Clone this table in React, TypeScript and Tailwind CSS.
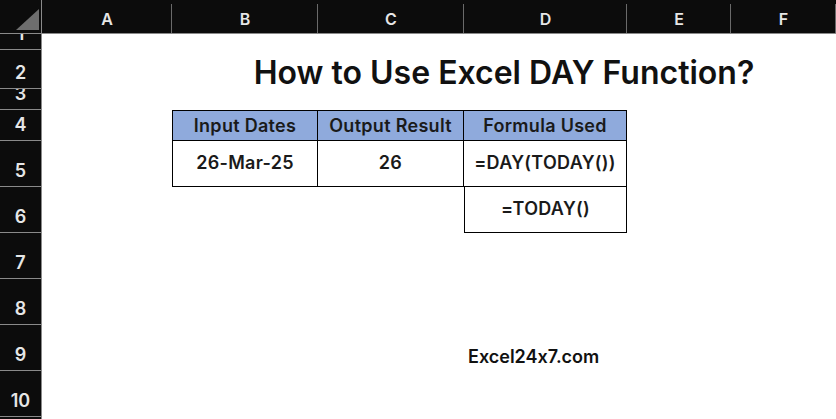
import React from "react";

const cols = ["A", "B", "C", "D", "E", "F"];
const rowHeights = [16, 39, 21, 31, 46, 46, 46, 46, 46, 46, 46];

const font = { fontFamily: "Inter, 'Liberation Sans', sans-serif" };

const cellText = "text-[18px] font-semibold text-[#1a1a1a] tracking-[0.3px] whitespace-nowrap";

export default function App() {
  return (
    <div
      className="w-[836px] h-[419px] overflow-hidden bg-white grid grid-cols-[42px_130px_146px_146px_163px_104px_105px] grid-rows-[34px_16px_39px_21px_31px_46px_46px_46px_46px_46px_46px_46px] [font-feature-settings:'calt'_0]"
      style={font}
    >
      {/* corner */}
      <div className="bg-[#0c0c0c] border-r border-b border-[#8a8a8a] relative">
        <svg width="42" height="34" className="absolute left-0 top-0">
          <polygon points="16,30 39,9 39,30" fill="#6e6e6e" />
        </svg>
      </div>

      {/* column headers */}
      {cols.map((c) => (
        <div key={c} className="bg-[#0c0c0c] border-b border-[#8a8a8a] flex items-center justify-center relative">
          <span className="text-[16px] font-semibold text-[#e6e6e6] leading-none pt-[4px]">{c}</span>
          <div className="absolute right-0 top-[4px] bottom-0 w-px bg-[#6a6a6a]" />
        </div>
      ))}

      {/* rows */}
      {rowHeights.map((h, i) => {
        const r = i + 1;
        return (
          <React.Fragment key={r}>
            <div className="bg-[#0c0c0c] border-r border-b border-[#8a8a8a] flex items-end justify-center overflow-hidden">
              <span className="text-[18px] font-semibold text-[#e6e6e6] leading-[18px] pb-[6px]">{r}</span>
            </div>
            {r === 2 ? (
              <>
                <div />
                <div className="col-span-5 flex items-center justify-center">
                  <span className="text-[32px] font-semibold text-[#111] leading-none pt-[6px] whitespace-nowrap">
                    How to Use Excel DAY Function?
                  </span>
                </div>
              </>
            ) : r === 4 ? (
              <>
                <div />
                <div className={`bg-[#8faadc] border border-black flex items-center justify-center ${cellText}`}>Input Dates</div>
                <div className={`bg-[#8faadc] border-y border-r border-black flex items-center justify-center ${cellText}`}>Output Result</div>
                <div className={`bg-[#8faadc] border-y border-r border-black flex items-center justify-center ${cellText}`}>Formula Used</div>
                <div />
                <div />
              </>
            ) : r === 5 ? (
              <>
                <div />
                <div className={`border-x border-b border-black flex items-center justify-center pb-[2px] ${cellText}`}>26-Mar-25</div>
                <div className={`border-r border-b border-black flex items-center justify-center pb-[2px] ${cellText}`}>26</div>
                <div className={`border-r border-b border-black flex items-center justify-center pb-[2px] ${cellText}`}>=DAY(TODAY())</div>
                <div />
                <div />
              </>
            ) : r === 6 ? (
              <>
                <div />
                <div />
                <div />
                <div className={`border-x border-b border-black flex items-center justify-center pb-[2px] ${cellText}`}>=TODAY()</div>
                <div />
                <div />
              </>
            ) : r === 9 ? (
              <>
                <div />
                <div />
                <div />
                <div className="flex items-end pl-[4px] pb-[5px] overflow-visible whitespace-nowrap">
                  <span className="text-[18px] font-semibold text-[#111] leading-[18px]">Excel24x7.com</span>
                </div>
                <div />
                <div />
              </>
            ) : (
              <>
                <div />
                <div />
                <div />
                <div />
                <div />
                <div />
              </>
            )}
          </React.Fragment>
        );
      })}
    </div>
  );
}
